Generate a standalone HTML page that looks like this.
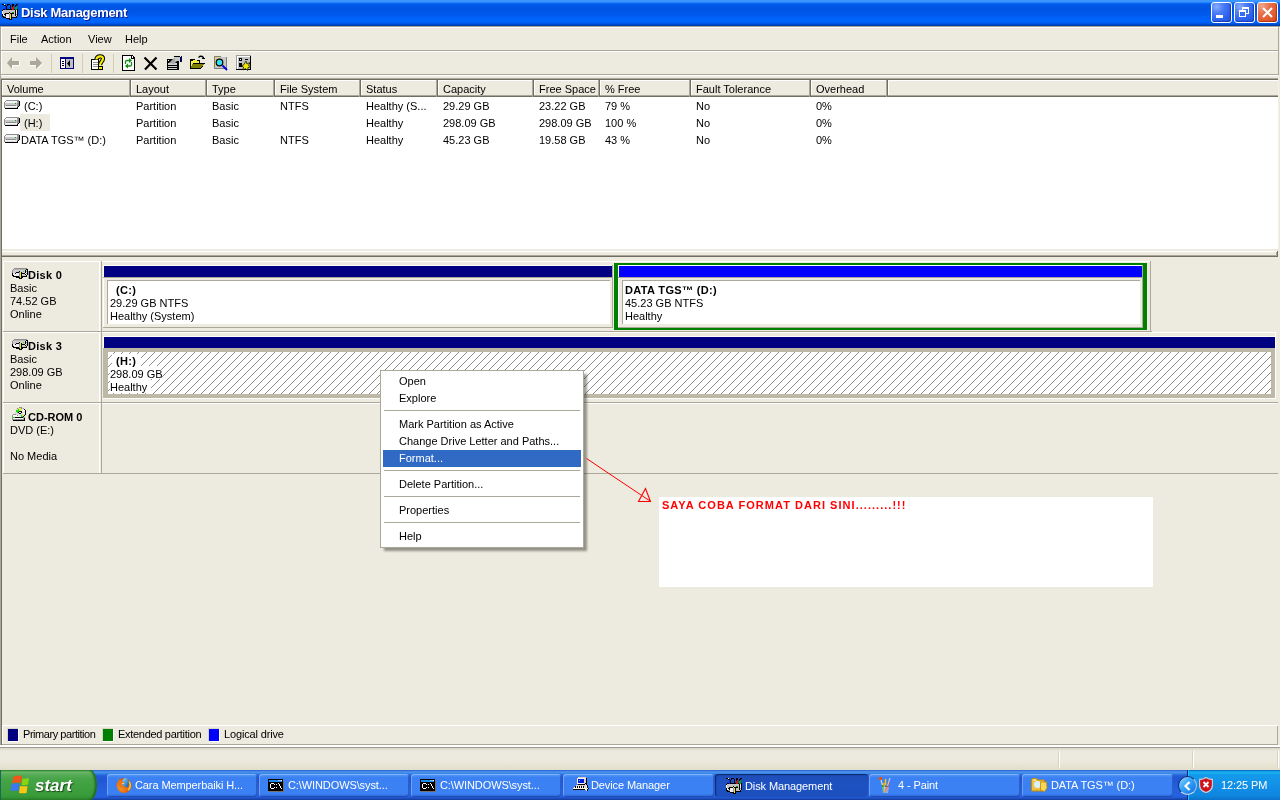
<!DOCTYPE html><html><head><meta charset="utf-8"><style>
*{margin:0;padding:0;box-sizing:border-box}
html,body{width:1280px;height:800px;overflow:hidden;background:#EDEADF;font-family:"Liberation Sans",sans-serif;font-size:11px;color:#000}
.a{position:absolute}
.t{position:absolute;white-space:nowrap;line-height:13px;margin-top:1px}
.b{font-weight:bold}
#title{left:0;top:0;width:1280px;height:26px;background:linear-gradient(to bottom,#3D95FF 0px,#3D95FF 2px,#0A6CF8 3px,#0058E6 5px,#0054E3 9px,#0058EC 14px,#0062F8 18px,#0066FF 21px,#005CF0 23px,#0046C0 25px,#00309A 26px)}
.tb{position:absolute;top:2px;width:21px;height:21px;border:1px solid #fff;border-radius:3px;box-shadow:inset -1px -1px 1px rgba(0,20,120,.45)}
.hc{position:absolute;top:0;height:16px;padding-left:5px;padding-top:1px;line-height:16px;white-space:nowrap}
.hc:before{content:"";position:absolute;left:0;top:0;width:1px;height:15px;background:#fff}
.nl:after{display:none}
.hc:after{content:"";position:absolute;right:0;top:-1px;width:1px;height:17px;background:#716F64;box-shadow:-1px 1px 0 #ACA899}
.cell{position:absolute;top:0;white-space:nowrap}
.mi{position:absolute;left:1px;width:201px;height:17px;line-height:17px;padding-left:18px;white-space:nowrap}
.sep{position:absolute;left:3px;width:197px;height:1px;background:#ACA899}
.tk{position:absolute;top:774px;height:23px;border-radius:3px;color:#fff;font-size:11px;line-height:22px;white-space:nowrap;overflow:hidden;background:linear-gradient(to bottom,#5A9BF8 0%,#3C81F3 15%,#3C81F3 85%,#2B62D8 100%);box-shadow:inset 1px 1px 0 rgba(255,255,255,.25),inset -1px -1px 0 rgba(0,0,40,.25)}
.tk .tt{position:absolute;left:28px;top:0;letter-spacing:-0.1px}
.tk svg{position:absolute;left:9px;top:3px}
</style></head><body><div style="position:absolute;left:0;top:0;width:1280px;height:800px;overflow:hidden;will-change:transform">
<div id="title" class="a">
<svg class="a" style="left:0px;top:4px" width="18" height="16" shape-rendering="crispEdges"><rect x="2" y="0" width="2" height="1" fill="#000"/><rect x="4" y="0" width="1" height="1" fill="#F0F0F0"/><rect x="7" y="0" width="3" height="1" fill="#000"/><rect x="12" y="0" width="2" height="1" fill="#000"/><rect x="16" y="0" width="2" height="1" fill="#000"/><rect x="4" y="1" width="2" height="1" fill="#000"/><rect x="7" y="1" width="1" height="1" fill="#000"/><rect x="10" y="1" width="1" height="1" fill="#000"/><rect x="12" y="1" width="2" height="1" fill="#000"/><rect x="15" y="1" width="2" height="1" fill="#000"/><rect x="5" y="2" width="1" height="1" fill="#1030F0"/><rect x="6" y="2" width="1" height="1" fill="#000"/><rect x="10" y="2" width="1" height="1" fill="#000"/><rect x="12" y="2" width="1" height="1" fill="#000"/><rect x="13" y="2" width="1" height="1" fill="#C01818"/><rect x="15" y="2" width="1" height="1" fill="#000"/><rect x="16" y="2" width="1" height="1" fill="#10A010"/><rect x="5" y="3" width="1" height="1" fill="#1030F0"/><rect x="6" y="3" width="1" height="1" fill="#000"/><rect x="10" y="3" width="1" height="1" fill="#000"/><rect x="12" y="3" width="2" height="1" fill="#C01818"/><rect x="15" y="3" width="2" height="1" fill="#10A010"/><rect x="4" y="4" width="2" height="1" fill="#1030F0"/><rect x="6" y="4" width="1" height="1" fill="#000"/><rect x="10" y="4" width="1" height="1" fill="#000"/><rect x="12" y="4" width="2" height="1" fill="#C01818"/><rect x="15" y="4" width="2" height="1" fill="#10A010"/><rect x="3" y="5" width="2" height="1" fill="#000"/><rect x="5" y="5" width="1" height="1" fill="#1030F0"/><rect x="6" y="5" width="6" height="1" fill="#000"/><rect x="12" y="5" width="2" height="1" fill="#C01818"/><rect x="14" y="5" width="1" height="1" fill="#000"/><rect x="15" y="5" width="2" height="1" fill="#10A010"/><rect x="17" y="5" width="1" height="1" fill="#000"/><rect x="2" y="6" width="1" height="1" fill="#000"/><rect x="3" y="6" width="12" height="1" fill="#C4C4C4"/><rect x="15" y="6" width="1" height="1" fill="#000"/><rect x="16" y="6" width="1" height="1" fill="#F0F0F0"/><rect x="17" y="6" width="1" height="1" fill="#000"/><rect x="2" y="7" width="1" height="1" fill="#F0F0F0"/><rect x="3" y="7" width="12" height="1" fill="#C4C4C4"/><rect x="15" y="7" width="1" height="1" fill="#000"/><rect x="16" y="7" width="1" height="1" fill="#F0F0F0"/><rect x="17" y="7" width="1" height="1" fill="#000"/><rect x="2" y="8" width="1" height="1" fill="#F0F0F0"/><rect x="3" y="8" width="6" height="1" fill="#C4C4C4"/><rect x="9" y="8" width="1" height="1" fill="#000"/><rect x="10" y="8" width="2" height="1" fill="#C4C4C4"/><rect x="12" y="8" width="2" height="1" fill="#10A010"/><rect x="14" y="8" width="1" height="1" fill="#C4C4C4"/><rect x="15" y="8" width="1" height="1" fill="#000"/><rect x="16" y="8" width="1" height="1" fill="#F0F0F0"/><rect x="17" y="8" width="1" height="1" fill="#000"/><rect x="2" y="9" width="1" height="1" fill="#F0F0F0"/><rect x="3" y="9" width="2" height="1" fill="#C4C4C4"/><rect x="5" y="9" width="4" height="1" fill="#000"/><rect x="9" y="9" width="1" height="1" fill="#F8F000"/><rect x="10" y="9" width="4" height="1" fill="#000"/><rect x="14" y="9" width="1" height="1" fill="#C4C4C4"/><rect x="15" y="9" width="1" height="1" fill="#000"/><rect x="16" y="9" width="1" height="1" fill="#F0F0F0"/><rect x="17" y="9" width="1" height="1" fill="#000"/><rect x="2" y="10" width="1" height="1" fill="#000"/><rect x="3" y="10" width="1" height="1" fill="#F0F0F0"/><rect x="4" y="10" width="2" height="1" fill="#000"/><rect x="6" y="10" width="3" height="1" fill="#F0F0F0"/><rect x="9" y="10" width="1" height="1" fill="#9090C0"/><rect x="10" y="10" width="1" height="1" fill="#F8F000"/><rect x="11" y="10" width="1" height="1" fill="#000"/><rect x="12" y="10" width="3" height="1" fill="#C4C4C4"/><rect x="15" y="10" width="1" height="1" fill="#000"/><rect x="16" y="10" width="1" height="1" fill="#909090"/><rect x="17" y="10" width="1" height="1" fill="#000"/><rect x="2" y="11" width="1" height="1" fill="#000"/><rect x="3" y="11" width="2" height="1" fill="#F0F0F0"/><rect x="5" y="11" width="1" height="1" fill="#000"/><rect x="6" y="11" width="3" height="1" fill="#F0F0F0"/><rect x="9" y="11" width="1" height="1" fill="#9090C0"/><rect x="10" y="11" width="1" height="1" fill="#F8F000"/><rect x="11" y="11" width="1" height="1" fill="#000"/><rect x="12" y="11" width="3" height="1" fill="#C4C4C4"/><rect x="15" y="11" width="1" height="1" fill="#000"/><rect x="16" y="11" width="1" height="1" fill="#F0F0F0"/><rect x="17" y="11" width="1" height="1" fill="#000"/><rect x="2" y="12" width="2" height="1" fill="#000"/><rect x="4" y="12" width="2" height="1" fill="#909090"/><rect x="6" y="12" width="3" height="1" fill="#F0F0F0"/><rect x="9" y="12" width="1" height="1" fill="#9090C0"/><rect x="10" y="12" width="1" height="1" fill="#F8F000"/><rect x="11" y="12" width="1" height="1" fill="#000"/><rect x="12" y="12" width="4" height="1" fill="#C4C4C4"/><rect x="16" y="12" width="1" height="1" fill="#000"/><rect x="3" y="13" width="3" height="1" fill="#000"/><rect x="6" y="13" width="3" height="1" fill="#F0F0F0"/><rect x="9" y="13" width="1" height="1" fill="#9090C0"/><rect x="10" y="13" width="1" height="1" fill="#F8F000"/><rect x="11" y="13" width="6" height="1" fill="#000"/><rect x="6" y="14" width="4" height="1" fill="#000"/><rect x="10" y="14" width="1" height="1" fill="#F8F000"/><rect x="11" y="14" width="1" height="1" fill="#000"/><rect x="9" y="15" width="3" height="1" fill="#000"/></svg>
<div class="a b" style="left:21px;top:5px;color:#fff;font-size:13px;line-height:16px;letter-spacing:-0.3px;text-shadow:1px 1px 0 #0F1E8C">Disk Management</div>
<div class="tb" style="left:1211px;background:radial-gradient(circle at 25% 20%,#8AAEFF 0%,#4C7EF5 30%,#2D62EE 65%,#1F55E5 100%)"><div class="a" style="left:4px;top:12px;width:7px;height:3px;background:#fff"></div></div>
<div class="tb" style="left:1234px;background:radial-gradient(circle at 25% 20%,#8AAEFF 0%,#4C7EF5 30%,#2D62EE 65%,#1F55E5 100%)"><div class="a" style="left:7px;top:4px;width:7px;height:7px;border:1px solid #fff;border-top-width:2px"></div><div class="a" style="left:4px;top:7px;width:7px;height:7px;border:1px solid #fff;border-top-width:2px;background:#3A6CF0"></div></div>
<div class="tb" style="left:1257px;width:21px;background:radial-gradient(circle at 20% 15%,#F4A58A 0%,#E8704C 35%,#E25A2C 70%,#D8461A 100%);box-shadow:inset -1px -1px 1px rgba(120,20,0,.5)"><svg class="a" style="left:4px;top:4px" width="11" height="11"><path d="M1 1 L10 10 M10 1 L1 10" stroke="#fff" stroke-width="2"/></svg></div>
</div>
<div class="a" style="left:0;top:26px;width:1280px;height:744px;background:#EDEADF"></div>
<div class="a" style="left:0;top:26px;width:1px;height:744px;background:#ACA899"></div>
<div class="a" style="left:1278px;top:27px;width:1px;height:24px;background:#ACA899"></div>
<div class="a" style="left:1278px;top:51px;width:1px;height:24px;background:#ACA899"></div>
<div class="a" style="left:1278px;top:79px;width:1px;height:170px;background:#F6F0E6"></div>
<div class="a" style="left:0px;top:26px;width:1280px;height:1px;background:#A8A490"></div>
<div class="a" style="left:1px;top:27px;width:1277px;height:1px;background:#fff"></div>
<div class="a" style="left:1px;top:27px;width:1px;height:23px;background:#fff"></div>
<div class="t" style="left:10px;top:32px">File</div>
<div class="t" style="left:41px;top:32px">Action</div>
<div class="t" style="left:88px;top:32px">View</div>
<div class="t" style="left:125px;top:32px">Help</div>
<div class="a" style="left:1px;top:50px;width:1277px;height:1px;background:#ACA899"></div>
<div class="a" style="left:1px;top:51px;width:1277px;height:1px;background:#fff"></div>
<div class="a" style="left:1px;top:52px;width:1px;height:22px;background:#fff"></div>
<div class="a" style="left:1px;top:74px;width:1277px;height:1px;background:#ACA899"></div>
<div class="a" style="left:1px;top:75px;width:1277px;height:1px;background:#fff"></div>
<div class="a" style="left:51px;top:54px;width:1px;height:19px;background:#D2CCB5"></div>
<div class="a" style="left:82px;top:54px;width:1px;height:19px;background:#D2CCB5"></div>
<div class="a" style="left:113px;top:54px;width:1px;height:19px;background:#D2CCB5"></div>
<svg class="a" style="left:0;top:50px" width="260" height="25" viewBox="0 50 260 25" shape-rendering="crispEdges">
<!-- back arrow -->
<path d="M12 57 L12 61 L19 61 L19 65 L12 65 L12 69 L7 63 Z" fill="#ACA899" shape-rendering="geometricPrecision"/>
<path d="M12.5 69 L12.5 65.5 L19.5 65.5 L19.5 61" stroke="#fff" fill="none" shape-rendering="geometricPrecision"/>
<!-- forward arrow -->
<path d="M36 57 L36 61 L30 61 L30 65 L36 65 L36 69 L42 63 Z" fill="#ACA899" shape-rendering="geometricPrecision"/>
<path d="M36.5 69.5 L42.5 63.5 M30 65.5 L36 65.5" stroke="#fff" fill="none" shape-rendering="geometricPrecision"/>
<!-- console tree -->
<rect x="60" y="57" width="14" height="12" fill="#000080"/>
<rect x="61" y="59" width="4" height="9" fill="#fff"/>
<rect x="66" y="59" width="7" height="9" fill="#C0C0C0"/>
<rect x="62" y="61" width="2" height="1" fill="#000"/><rect x="62" y="63" width="2" height="1" fill="#000"/><rect x="62" y="65" width="2" height="1" fill="#000"/>
<path d="M70 60 L70 67 L67 63.5 Z" fill="#000" shape-rendering="geometricPrecision"/>
<!-- help -->
<rect x="91" y="59" width="8" height="11" fill="#000"/>
<rect x="92" y="60" width="6" height="9" fill="#fff"/>
<rect x="93" y="62" width="5" height="1" fill="#909090"/><rect x="93" y="64" width="5" height="1" fill="#909090"/><rect x="93" y="66" width="5" height="1" fill="#909090"/>
<path d="M96.5 59.5 C96.5 56 103 55 103 58.5 C103 61 100.5 62 100 65" stroke="#000" stroke-width="4.2" fill="none" shape-rendering="geometricPrecision"/>
<path d="M96.5 59.5 C96.5 56 103 55 103 58.5 C103 61 100.5 62 100 65" stroke="#F8F000" stroke-width="2.2" fill="none" shape-rendering="geometricPrecision"/>
<rect x="98" y="66" width="5" height="4" fill="#000"/>
<rect x="99" y="67" width="3" height="2" fill="#F8F000"/>
<!-- refresh doc -->
<path d="M122 55 L132 55 L135 58 L135 71 L122 71 Z" fill="#000"/>
<path d="M123 56 L131 56 L131 59 L134 59 L134 70 L123 70 Z" fill="#fff"/>
<rect x="132" y="56" width="1" height="2" fill="#fff"/>
<path d="M125.5 64 L125.5 61.5 Q125.5 60.5 127 60.5 L130 60.5" stroke="#109010" stroke-width="1.3" fill="none" shape-rendering="geometricPrecision"/>
<path d="M129 58 L132 60.5 L129 63 Z" fill="#109010" shape-rendering="geometricPrecision"/>
<path d="M131.5 62 L131.5 65 Q131.5 66 130 66 L127 66" stroke="#109010" stroke-width="1.3" fill="none" shape-rendering="geometricPrecision"/>
<path d="M128 63.5 L125 66 L128 68.5 Z" fill="#109010" shape-rendering="geometricPrecision"/>
<!-- delete X -->
<path d="M144.5 57.5 L156.5 69.5 M156.5 57.5 L145 69.5" stroke="#000" stroke-width="2.2" fill="none" shape-rendering="geometricPrecision"/>
<!-- properties -->
<rect x="167" y="59" width="12" height="11" fill="#000"/>
<rect x="168" y="63" width="9" height="2" fill="#D0D0D0"/>
<rect x="168" y="66" width="9" height="1" fill="#D0D0D0"/>
<rect x="168" y="68" width="9" height="1" fill="#D0D0D0"/>
<rect x="168" y="60" width="1" height="1" fill="#fff"/>
<path d="M169 63 L175 57 L178 60 L174 64 Z" fill="#A8A8A8" shape-rendering="geometricPrecision"/>
<rect x="174" y="56" width="6" height="1" fill="#000"/>
<rect x="175" y="57" width="5" height="4" fill="#C8C8C8"/>
<rect x="180" y="57" width="1" height="5" fill="#000"/>
<rect x="181" y="56" width="1" height="6" fill="#0000A0"/>
<!-- open folder -->
<path d="M190 59 L194 59 L195 60 L200 60 L200 63 L205 63 L201 69 L190 69 Z" fill="#000"/>
<path d="M191 61 L194 60 L199 61 L199 63 L193 63 L191 67 Z" fill="#F8F040"/>
<path d="M192 64 L204 64 L200 68 L191 68 Z" fill="#808000"/>
<path d="M198.5 57.5 Q201 55 203.5 57.5" stroke="#000" stroke-width="1.2" fill="none" shape-rendering="geometricPrecision"/>
<rect x="203" y="57" width="1" height="2" fill="#000"/><rect x="202" y="58" width="3" height="1" fill="#000"/>
<!-- search -->
<path d="M214 56 L220 56 L221 57 L227 57 L227 69 L214 69 Z" fill="#808080"/>
<rect x="215" y="57" width="11" height="11" fill="#C8C8C8"/>
<path d="M215 57 h6 M215 57 v10" stroke="#F0E020" stroke-dasharray="1 1" fill="none"/>
<circle cx="219.5" cy="62.5" r="3.3" fill="#30E0F0" stroke="#000" stroke-width="1.2" shape-rendering="geometricPrecision"/>
<path d="M222.5 65.5 L227 70" stroke="#0000E0" stroke-width="1.8" shape-rendering="geometricPrecision"/>
<!-- settings -->
<rect x="236" y="55" width="15" height="15" fill="#A0A0A0"/>
<rect x="237" y="56" width="13" height="13" fill="#fff"/>
<rect x="238" y="57" width="12" height="12" fill="#C0C0C0"/>
<rect x="250" y="56" width="1" height="14" fill="#000"/>
<rect x="236" y="69" width="15" height="1" fill="#000"/>
<rect x="239" y="58" width="3" height="3" fill="#000"/><rect x="240" y="59" width="1" height="1" fill="#fff"/>
<rect x="239" y="63" width="3" height="4" fill="#000"/>
<rect x="245" y="59" width="3" height="1" fill="#000"/>
<path d="M246 61 L247 64 L250 62.5 L248.5 65.5 L251 67 L248 67.5 L247.5 70.5 L245.5 68.5 L243 70 L243.5 67 L241.5 66 L244 64.5 Z" fill="#F0E800" stroke="#000" stroke-width="0.7" shape-rendering="geometricPrecision"/>
</svg>
<div class="a" style="left:1px;top:78px;width:1277px;height:1px;background:#ACA899"></div>
<div class="a" style="left:1px;top:79px;width:1px;height:178px;background:#716F64"></div>
<div class="a" style="left:2px;top:79px;width:1276px;height:1px;background:#716F64"></div>
<div class="a" style="left:2px;top:80px;width:1276px;height:169px;background:#fff"></div>
<div class="a" style="left:2px;top:80px;width:1276px;height:17px;background:#EDEADF;border-bottom:1px solid #716F64"></div>
<div class="a" style="left:2px;top:95px;width:1276px;height:1px;background:#ACA899"></div>
<div class="a" style="left:2px;top:80px;width:1276px;height:1px;background:#fff"></div>
<div class="hc" style="left:2px;top:80px;width:129px">Volume</div>
<div class="hc" style="left:131px;top:80px;width:76px">Layout</div>
<div class="hc" style="left:207px;top:80px;width:68px">Type</div>
<div class="hc" style="left:275px;top:80px;width:86px">File System</div>
<div class="hc" style="left:361px;top:80px;width:77px">Status</div>
<div class="hc" style="left:438px;top:80px;width:96px">Capacity</div>
<div class="hc" style="left:534px;top:80px;width:66px">Free Space</div>
<div class="hc" style="left:600px;top:80px;width:91px">% Free</div>
<div class="hc" style="left:691px;top:80px;width:120px">Fault Tolerance</div>
<div class="hc" style="left:811px;top:80px;width:77px">Overhead</div>
<div class="hc nl" style="left:888px;top:80px;width:390px"></div>
<svg class="a" style="left:4px;top:100px" width="16" height="9" shape-rendering="crispEdges"><rect x="2" y="0" width="13" height="1" fill="#8E8E8E"/><rect x="1" y="1" width="1" height="1" fill="#8E8E8E"/><rect x="2" y="1" width="11" height="1" fill="#F4F4F4"/><rect x="13" y="1" width="2" height="1" fill="#8E8E8E"/><rect x="15" y="1" width="1" height="1" fill="#000"/><rect x="0" y="2" width="1" height="1" fill="#8E8E8E"/><rect x="1" y="2" width="12" height="1" fill="#F4F4F4"/><rect x="13" y="2" width="1" height="1" fill="#B0B0B0"/><rect x="14" y="2" width="1" height="1" fill="#8E8E8E"/><rect x="15" y="2" width="1" height="1" fill="#000"/><rect x="0" y="3" width="1" height="1" fill="#8E8E8E"/><rect x="1" y="3" width="10" height="1" fill="#C8C8C8"/><rect x="11" y="3" width="1" height="1" fill="#10A010"/><rect x="12" y="3" width="1" height="1" fill="#C8C8C8"/><rect x="13" y="3" width="2" height="1" fill="#8E8E8E"/><rect x="15" y="3" width="1" height="1" fill="#000"/><rect x="0" y="4" width="1" height="1" fill="#8E8E8E"/><rect x="1" y="4" width="12" height="1" fill="#C8C8C8"/><rect x="13" y="4" width="2" height="1" fill="#8E8E8E"/><rect x="15" y="4" width="1" height="1" fill="#000"/><rect x="0" y="5" width="1" height="1" fill="#8E8E8E"/><rect x="1" y="5" width="1" height="1" fill="#C8C8C8"/><rect x="2" y="5" width="10" height="1" fill="#8A8A8A"/><rect x="12" y="5" width="1" height="1" fill="#C8C8C8"/><rect x="13" y="5" width="2" height="1" fill="#8E8E8E"/><rect x="15" y="5" width="1" height="1" fill="#000"/><rect x="0" y="6" width="1" height="1" fill="#8E8E8E"/><rect x="1" y="6" width="12" height="1" fill="#F4F4F4"/><rect x="13" y="6" width="1" height="1" fill="#8E8E8E"/><rect x="14" y="6" width="1" height="1" fill="#000"/><rect x="0" y="7" width="1" height="1" fill="#8E8E8E"/><rect x="1" y="7" width="12" height="1" fill="#E0E0E0"/><rect x="13" y="7" width="1" height="1" fill="#000"/><rect x="1" y="8" width="13" height="1" fill="#000"/></svg>
<div class="t" style="left:24px;top:99px">(C:)</div>
<div class="t" style="left:136px;top:99px">Partition</div>
<div class="t" style="left:212px;top:99px">Basic</div>
<div class="t" style="left:280px;top:99px">NTFS</div>
<div class="t" style="left:366px;top:99px">Healthy (S...</div>
<div class="t" style="left:443px;top:99px">29.29 GB</div>
<div class="t" style="left:539px;top:99px">23.22 GB</div>
<div class="t" style="left:605px;top:99px">79 %</div>
<div class="t" style="left:696px;top:99px">No</div>
<div class="t" style="left:816px;top:99px">0%</div>
<svg class="a" style="left:4px;top:117px" width="16" height="9" shape-rendering="crispEdges"><rect x="2" y="0" width="13" height="1" fill="#8E8E8E"/><rect x="1" y="1" width="1" height="1" fill="#8E8E8E"/><rect x="2" y="1" width="11" height="1" fill="#F4F4F4"/><rect x="13" y="1" width="2" height="1" fill="#8E8E8E"/><rect x="15" y="1" width="1" height="1" fill="#000"/><rect x="0" y="2" width="1" height="1" fill="#8E8E8E"/><rect x="1" y="2" width="12" height="1" fill="#F4F4F4"/><rect x="13" y="2" width="1" height="1" fill="#B0B0B0"/><rect x="14" y="2" width="1" height="1" fill="#8E8E8E"/><rect x="15" y="2" width="1" height="1" fill="#000"/><rect x="0" y="3" width="1" height="1" fill="#8E8E8E"/><rect x="1" y="3" width="10" height="1" fill="#C8C8C8"/><rect x="11" y="3" width="1" height="1" fill="#10A010"/><rect x="12" y="3" width="1" height="1" fill="#C8C8C8"/><rect x="13" y="3" width="2" height="1" fill="#8E8E8E"/><rect x="15" y="3" width="1" height="1" fill="#000"/><rect x="0" y="4" width="1" height="1" fill="#8E8E8E"/><rect x="1" y="4" width="12" height="1" fill="#C8C8C8"/><rect x="13" y="4" width="2" height="1" fill="#8E8E8E"/><rect x="15" y="4" width="1" height="1" fill="#000"/><rect x="0" y="5" width="1" height="1" fill="#8E8E8E"/><rect x="1" y="5" width="1" height="1" fill="#C8C8C8"/><rect x="2" y="5" width="10" height="1" fill="#8A8A8A"/><rect x="12" y="5" width="1" height="1" fill="#C8C8C8"/><rect x="13" y="5" width="2" height="1" fill="#8E8E8E"/><rect x="15" y="5" width="1" height="1" fill="#000"/><rect x="0" y="6" width="1" height="1" fill="#8E8E8E"/><rect x="1" y="6" width="12" height="1" fill="#F4F4F4"/><rect x="13" y="6" width="1" height="1" fill="#8E8E8E"/><rect x="14" y="6" width="1" height="1" fill="#000"/><rect x="0" y="7" width="1" height="1" fill="#8E8E8E"/><rect x="1" y="7" width="12" height="1" fill="#E0E0E0"/><rect x="13" y="7" width="1" height="1" fill="#000"/><rect x="1" y="8" width="13" height="1" fill="#000"/></svg>
<div class="a" style="left:20px;top:114px;width:30px;height:17px;background:#EDEADF"></div>
<div class="t" style="left:24px;top:116px">(H:)</div>
<div class="t" style="left:136px;top:116px">Partition</div>
<div class="t" style="left:212px;top:116px">Basic</div>
<div class="t" style="left:280px;top:116px"></div>
<div class="t" style="left:366px;top:116px">Healthy</div>
<div class="t" style="left:443px;top:116px">298.09 GB</div>
<div class="t" style="left:539px;top:116px">298.09 GB</div>
<div class="t" style="left:605px;top:116px">100 %</div>
<div class="t" style="left:696px;top:116px">No</div>
<div class="t" style="left:816px;top:116px">0%</div>
<svg class="a" style="left:4px;top:134px" width="16" height="9" shape-rendering="crispEdges"><rect x="2" y="0" width="13" height="1" fill="#8E8E8E"/><rect x="1" y="1" width="1" height="1" fill="#8E8E8E"/><rect x="2" y="1" width="11" height="1" fill="#F4F4F4"/><rect x="13" y="1" width="2" height="1" fill="#8E8E8E"/><rect x="15" y="1" width="1" height="1" fill="#000"/><rect x="0" y="2" width="1" height="1" fill="#8E8E8E"/><rect x="1" y="2" width="12" height="1" fill="#F4F4F4"/><rect x="13" y="2" width="1" height="1" fill="#B0B0B0"/><rect x="14" y="2" width="1" height="1" fill="#8E8E8E"/><rect x="15" y="2" width="1" height="1" fill="#000"/><rect x="0" y="3" width="1" height="1" fill="#8E8E8E"/><rect x="1" y="3" width="10" height="1" fill="#C8C8C8"/><rect x="11" y="3" width="1" height="1" fill="#10A010"/><rect x="12" y="3" width="1" height="1" fill="#C8C8C8"/><rect x="13" y="3" width="2" height="1" fill="#8E8E8E"/><rect x="15" y="3" width="1" height="1" fill="#000"/><rect x="0" y="4" width="1" height="1" fill="#8E8E8E"/><rect x="1" y="4" width="12" height="1" fill="#C8C8C8"/><rect x="13" y="4" width="2" height="1" fill="#8E8E8E"/><rect x="15" y="4" width="1" height="1" fill="#000"/><rect x="0" y="5" width="1" height="1" fill="#8E8E8E"/><rect x="1" y="5" width="1" height="1" fill="#C8C8C8"/><rect x="2" y="5" width="10" height="1" fill="#8A8A8A"/><rect x="12" y="5" width="1" height="1" fill="#C8C8C8"/><rect x="13" y="5" width="2" height="1" fill="#8E8E8E"/><rect x="15" y="5" width="1" height="1" fill="#000"/><rect x="0" y="6" width="1" height="1" fill="#8E8E8E"/><rect x="1" y="6" width="12" height="1" fill="#F4F4F4"/><rect x="13" y="6" width="1" height="1" fill="#8E8E8E"/><rect x="14" y="6" width="1" height="1" fill="#000"/><rect x="0" y="7" width="1" height="1" fill="#8E8E8E"/><rect x="1" y="7" width="12" height="1" fill="#E0E0E0"/><rect x="13" y="7" width="1" height="1" fill="#000"/><rect x="1" y="8" width="13" height="1" fill="#000"/></svg>
<div class="t" style="left:21px;top:133px">DATA TGS™ (D:)</div>
<div class="t" style="left:136px;top:133px">Partition</div>
<div class="t" style="left:212px;top:133px">Basic</div>
<div class="t" style="left:280px;top:133px">NTFS</div>
<div class="t" style="left:366px;top:133px">Healthy</div>
<div class="t" style="left:443px;top:133px">45.23 GB</div>
<div class="t" style="left:539px;top:133px">19.58 GB</div>
<div class="t" style="left:605px;top:133px">43 %</div>
<div class="t" style="left:696px;top:133px">No</div>
<div class="t" style="left:816px;top:133px">0%</div>
<div class="a" style="left:2px;top:251px;width:1275px;height:1px;background:#fff"></div>
<div class="a" style="left:2px;top:255px;width:1275px;height:1px;background:#ACA899"></div>
<div class="a" style="left:1276px;top:252px;width:1px;height:4px;background:#ACA899"></div>
<div class="a" style="left:1277px;top:251px;width:1px;height:6px;background:#716F64"></div>
<div class="a" style="left:1px;top:256px;width:1277px;height:1px;background:#716F64"></div>
<div class="a" style="left:1px;top:257px;width:1px;height:488px;background:#716F64"></div>
<div class="a" style="left:2px;top:726px;width:1px;height:18px;background:#fff"></div>
<div class="a" style="left:1277px;top:725px;width:1px;height:20px;background:#ACA899"></div>
<div class="a" style="left:3px;top:261px;width:1148px;height:1px;background:#fff"></div>
<div class="a" style="left:3px;top:261px;width:1px;height:70px;background:#fff"></div>
<div class="a" style="left:3px;top:331px;width:1149px;height:1px;background:#ACA899"></div>
<div class="a" style="left:99px;top:261px;width:1px;height:70px;background:#fff"></div>
<div class="a" style="left:101px;top:261px;width:1px;height:70px;background:#ACA899"></div>
<div class="a" style="left:3px;top:332px;width:1274px;height:1px;background:#fff"></div>
<div class="a" style="left:3px;top:332px;width:1px;height:70px;background:#fff"></div>
<div class="a" style="left:3px;top:402px;width:1275px;height:1px;background:#ACA899"></div>
<div class="a" style="left:99px;top:332px;width:1px;height:70px;background:#fff"></div>
<div class="a" style="left:101px;top:332px;width:1px;height:70px;background:#ACA899"></div>
<div class="a" style="left:3px;top:403px;width:1274px;height:1px;background:#fff"></div>
<div class="a" style="left:3px;top:403px;width:1px;height:70px;background:#fff"></div>
<div class="a" style="left:3px;top:473px;width:1275px;height:1px;background:#ACA899"></div>
<div class="a" style="left:99px;top:403px;width:1px;height:70px;background:#fff"></div>
<div class="a" style="left:101px;top:403px;width:1px;height:70px;background:#ACA899"></div>
<svg class="a" style="left:12px;top:268px" width="16" height="11" shape-rendering="crispEdges"><rect x="2" y="0" width="13" height="1" fill="#8E8E8E"/><rect x="1" y="1" width="1" height="1" fill="#8E8E8E"/><rect x="2" y="1" width="12" height="1" fill="#B4B4B4"/><rect x="14" y="1" width="2" height="1" fill="#000"/><rect x="0" y="2" width="1" height="1" fill="#8E8E8E"/><rect x="1" y="2" width="12" height="1" fill="#CCCCCC"/><rect x="13" y="2" width="1" height="1" fill="#000"/><rect x="14" y="2" width="1" height="1" fill="#F0F0F0"/><rect x="15" y="2" width="1" height="1" fill="#000"/><rect x="0" y="3" width="1" height="1" fill="#8E8E8E"/><rect x="1" y="3" width="6" height="1" fill="#CCCCCC"/><rect x="7" y="3" width="1" height="1" fill="#000"/><rect x="8" y="3" width="3" height="1" fill="#CCCCCC"/><rect x="11" y="3" width="1" height="1" fill="#20F020"/><rect x="12" y="3" width="1" height="1" fill="#CCCCCC"/><rect x="13" y="3" width="1" height="1" fill="#000"/><rect x="14" y="3" width="1" height="1" fill="#8E8E8E"/><rect x="15" y="3" width="1" height="1" fill="#000"/><rect x="0" y="4" width="1" height="1" fill="#8E8E8E"/><rect x="1" y="4" width="3" height="1" fill="#CCCCCC"/><rect x="4" y="4" width="3" height="1" fill="#000"/><rect x="7" y="4" width="1" height="1" fill="#9090B8"/><rect x="8" y="4" width="1" height="1" fill="#F0F000"/><rect x="9" y="4" width="1" height="1" fill="#000"/><rect x="10" y="4" width="3" height="1" fill="#CCCCCC"/><rect x="13" y="4" width="1" height="1" fill="#000"/><rect x="14" y="4" width="1" height="1" fill="#F0F0F0"/><rect x="15" y="4" width="1" height="1" fill="#000"/><rect x="0" y="5" width="1" height="1" fill="#000"/><rect x="1" y="5" width="2" height="1" fill="#F0F0F0"/><rect x="3" y="5" width="1" height="1" fill="#000"/><rect x="4" y="5" width="3" height="1" fill="#F0F0F0"/><rect x="7" y="5" width="1" height="1" fill="#9090B8"/><rect x="8" y="5" width="1" height="1" fill="#F0F000"/><rect x="9" y="5" width="4" height="1" fill="#000"/><rect x="13" y="5" width="1" height="1" fill="#F0F0F0"/><rect x="14" y="5" width="1" height="1" fill="#8E8E8E"/><rect x="15" y="5" width="1" height="1" fill="#000"/><rect x="0" y="6" width="1" height="1" fill="#000"/><rect x="1" y="6" width="6" height="1" fill="#F0F0F0"/><rect x="7" y="6" width="1" height="1" fill="#9090B8"/><rect x="8" y="6" width="1" height="1" fill="#F0F000"/><rect x="9" y="6" width="1" height="1" fill="#000"/><rect x="10" y="6" width="3" height="1" fill="#CCCCCC"/><rect x="13" y="6" width="1" height="1" fill="#000"/><rect x="14" y="6" width="1" height="1" fill="#F0F0F0"/><rect x="15" y="6" width="1" height="1" fill="#000"/><rect x="0" y="7" width="2" height="1" fill="#000"/><rect x="2" y="7" width="5" height="1" fill="#F0F0F0"/><rect x="7" y="7" width="1" height="1" fill="#9090B8"/><rect x="8" y="7" width="1" height="1" fill="#F0F000"/><rect x="9" y="7" width="1" height="1" fill="#000"/><rect x="10" y="7" width="4" height="1" fill="#CCCCCC"/><rect x="14" y="7" width="1" height="1" fill="#000"/><rect x="1" y="8" width="6" height="1" fill="#000"/><rect x="7" y="8" width="1" height="1" fill="#9090B8"/><rect x="8" y="8" width="1" height="1" fill="#F0F000"/><rect x="9" y="8" width="6" height="1" fill="#000"/><rect x="4" y="9" width="4" height="1" fill="#000"/><rect x="8" y="9" width="1" height="1" fill="#F0F000"/><rect x="9" y="9" width="2" height="1" fill="#000"/><rect x="7" y="10" width="3" height="1" fill="#000"/></svg>
<div class="t b" style="left:28px;top:268px;letter-spacing:0.3px">Disk 0</div>
<div class="t" style="left:10px;top:281px">Basic</div>
<div class="t" style="left:10px;top:294px">74.52 GB</div>
<div class="t" style="left:10px;top:307px">Online</div>
<svg class="a" style="left:12px;top:339px" width="16" height="11" shape-rendering="crispEdges"><rect x="2" y="0" width="13" height="1" fill="#8E8E8E"/><rect x="1" y="1" width="1" height="1" fill="#8E8E8E"/><rect x="2" y="1" width="12" height="1" fill="#B4B4B4"/><rect x="14" y="1" width="2" height="1" fill="#000"/><rect x="0" y="2" width="1" height="1" fill="#8E8E8E"/><rect x="1" y="2" width="12" height="1" fill="#CCCCCC"/><rect x="13" y="2" width="1" height="1" fill="#000"/><rect x="14" y="2" width="1" height="1" fill="#F0F0F0"/><rect x="15" y="2" width="1" height="1" fill="#000"/><rect x="0" y="3" width="1" height="1" fill="#8E8E8E"/><rect x="1" y="3" width="6" height="1" fill="#CCCCCC"/><rect x="7" y="3" width="1" height="1" fill="#000"/><rect x="8" y="3" width="3" height="1" fill="#CCCCCC"/><rect x="11" y="3" width="1" height="1" fill="#20F020"/><rect x="12" y="3" width="1" height="1" fill="#CCCCCC"/><rect x="13" y="3" width="1" height="1" fill="#000"/><rect x="14" y="3" width="1" height="1" fill="#8E8E8E"/><rect x="15" y="3" width="1" height="1" fill="#000"/><rect x="0" y="4" width="1" height="1" fill="#8E8E8E"/><rect x="1" y="4" width="3" height="1" fill="#CCCCCC"/><rect x="4" y="4" width="3" height="1" fill="#000"/><rect x="7" y="4" width="1" height="1" fill="#9090B8"/><rect x="8" y="4" width="1" height="1" fill="#F0F000"/><rect x="9" y="4" width="1" height="1" fill="#000"/><rect x="10" y="4" width="3" height="1" fill="#CCCCCC"/><rect x="13" y="4" width="1" height="1" fill="#000"/><rect x="14" y="4" width="1" height="1" fill="#F0F0F0"/><rect x="15" y="4" width="1" height="1" fill="#000"/><rect x="0" y="5" width="1" height="1" fill="#000"/><rect x="1" y="5" width="2" height="1" fill="#F0F0F0"/><rect x="3" y="5" width="1" height="1" fill="#000"/><rect x="4" y="5" width="3" height="1" fill="#F0F0F0"/><rect x="7" y="5" width="1" height="1" fill="#9090B8"/><rect x="8" y="5" width="1" height="1" fill="#F0F000"/><rect x="9" y="5" width="4" height="1" fill="#000"/><rect x="13" y="5" width="1" height="1" fill="#F0F0F0"/><rect x="14" y="5" width="1" height="1" fill="#8E8E8E"/><rect x="15" y="5" width="1" height="1" fill="#000"/><rect x="0" y="6" width="1" height="1" fill="#000"/><rect x="1" y="6" width="6" height="1" fill="#F0F0F0"/><rect x="7" y="6" width="1" height="1" fill="#9090B8"/><rect x="8" y="6" width="1" height="1" fill="#F0F000"/><rect x="9" y="6" width="1" height="1" fill="#000"/><rect x="10" y="6" width="3" height="1" fill="#CCCCCC"/><rect x="13" y="6" width="1" height="1" fill="#000"/><rect x="14" y="6" width="1" height="1" fill="#F0F0F0"/><rect x="15" y="6" width="1" height="1" fill="#000"/><rect x="0" y="7" width="2" height="1" fill="#000"/><rect x="2" y="7" width="5" height="1" fill="#F0F0F0"/><rect x="7" y="7" width="1" height="1" fill="#9090B8"/><rect x="8" y="7" width="1" height="1" fill="#F0F000"/><rect x="9" y="7" width="1" height="1" fill="#000"/><rect x="10" y="7" width="4" height="1" fill="#CCCCCC"/><rect x="14" y="7" width="1" height="1" fill="#000"/><rect x="1" y="8" width="6" height="1" fill="#000"/><rect x="7" y="8" width="1" height="1" fill="#9090B8"/><rect x="8" y="8" width="1" height="1" fill="#F0F000"/><rect x="9" y="8" width="6" height="1" fill="#000"/><rect x="4" y="9" width="4" height="1" fill="#000"/><rect x="8" y="9" width="1" height="1" fill="#F0F000"/><rect x="9" y="9" width="2" height="1" fill="#000"/><rect x="7" y="10" width="3" height="1" fill="#000"/></svg>
<div class="t b" style="left:28px;top:339px;letter-spacing:0.3px">Disk 3</div>
<div class="t" style="left:10px;top:352px">Basic</div>
<div class="t" style="left:10px;top:365px">298.09 GB</div>
<div class="t" style="left:10px;top:378px">Online</div>
<svg class="a" style="left:12px;top:407px" width="17" height="14" shape-rendering="crispEdges"><rect x="7" y="0" width="3" height="1" fill="#8E8E8E"/><rect x="5" y="1" width="1" height="1" fill="#8E8E8E"/><rect x="6" y="1" width="1" height="1" fill="#D8D8E0"/><rect x="7" y="1" width="2" height="1" fill="#F8F000"/><rect x="9" y="1" width="1" height="1" fill="#8E8E8E"/><rect x="10" y="1" width="1" height="1" fill="#D8D8E0"/><rect x="11" y="1" width="1" height="1" fill="#8E8E8E"/><rect x="4" y="2" width="2" height="1" fill="#D8D8E0"/><rect x="6" y="2" width="1" height="1" fill="#10E010"/><rect x="7" y="2" width="2" height="1" fill="#F8F000"/><rect x="9" y="2" width="2" height="1" fill="#D8D8E0"/><rect x="11" y="2" width="1" height="1" fill="#F8F8F8"/><rect x="12" y="2" width="1" height="1" fill="#000"/><rect x="4" y="3" width="3" height="1" fill="#10E010"/><rect x="7" y="3" width="2" height="1" fill="#F8F000"/><rect x="9" y="3" width="1" height="1" fill="#D8D8E0"/><rect x="10" y="3" width="3" height="1" fill="#F8F8F8"/><rect x="13" y="3" width="1" height="1" fill="#000"/><rect x="4" y="4" width="3" height="1" fill="#10E010"/><rect x="7" y="4" width="3" height="1" fill="#000"/><rect x="10" y="4" width="3" height="1" fill="#F8F8F8"/><rect x="13" y="4" width="1" height="1" fill="#000"/><rect x="3" y="5" width="2" height="1" fill="#D8D8E0"/><rect x="5" y="5" width="1" height="1" fill="#10E010"/><rect x="6" y="5" width="1" height="1" fill="#000"/><rect x="7" y="5" width="2" height="1" fill="#F8F8F8"/><rect x="9" y="5" width="1" height="1" fill="#000"/><rect x="10" y="5" width="3" height="1" fill="#D8D8E0"/><rect x="13" y="5" width="1" height="1" fill="#000"/><rect x="3" y="6" width="4" height="1" fill="#D8D8E0"/><rect x="7" y="6" width="2" height="1" fill="#000"/><rect x="9" y="6" width="2" height="1" fill="#D8D8E0"/><rect x="11" y="6" width="2" height="1" fill="#F8F8F8"/><rect x="13" y="6" width="1" height="1" fill="#000"/><rect x="1" y="7" width="3" height="1" fill="#8E8E8E"/><rect x="4" y="7" width="6" height="1" fill="#D8D8E0"/><rect x="10" y="7" width="1" height="1" fill="#F8F000"/><rect x="11" y="7" width="2" height="1" fill="#D8D8E0"/><rect x="13" y="7" width="1" height="1" fill="#000"/><rect x="0" y="8" width="1" height="1" fill="#8E8E8E"/><rect x="1" y="8" width="4" height="1" fill="#F8F8F8"/><rect x="5" y="8" width="1" height="1" fill="#8E8E8E"/><rect x="6" y="8" width="1" height="1" fill="#F8F8F8"/><rect x="7" y="8" width="2" height="1" fill="#D8D8E0"/><rect x="9" y="8" width="1" height="1" fill="#10E010"/><rect x="10" y="8" width="1" height="1" fill="#F8F000"/><rect x="11" y="8" width="1" height="1" fill="#D8D8E0"/><rect x="12" y="8" width="1" height="1" fill="#000"/><rect x="0" y="9" width="1" height="1" fill="#8E8E8E"/><rect x="1" y="9" width="8" height="1" fill="#F8F8F8"/><rect x="9" y="9" width="2" height="1" fill="#10E010"/><rect x="11" y="9" width="1" height="1" fill="#000"/><rect x="0" y="10" width="1" height="1" fill="#8E8E8E"/><rect x="1" y="10" width="2" height="1" fill="#10E010"/><rect x="3" y="10" width="8" height="1" fill="#000"/><rect x="11" y="10" width="1" height="1" fill="#A8A8A8"/><rect x="12" y="10" width="1" height="1" fill="#8E8E8E"/><rect x="0" y="11" width="1" height="1" fill="#8E8E8E"/><rect x="1" y="11" width="10" height="1" fill="#F8F8F8"/><rect x="11" y="11" width="1" height="1" fill="#A8A8A8"/><rect x="12" y="11" width="1" height="1" fill="#000"/><rect x="0" y="12" width="12" height="1" fill="#8E8E8E"/><rect x="12" y="12" width="1" height="1" fill="#000"/><rect x="1" y="13" width="12" height="1" fill="#000"/></svg>
<div class="t b" style="left:28px;top:410px">CD-ROM 0</div>
<div class="t" style="left:10px;top:423px">DVD (E:)</div>
<div class="t" style="left:10px;top:449px">No Media</div>
<div class="a" style="left:103px;top:265px;width:509px;height:1px;background:#fff"></div>
<div class="a" style="left:103px;top:265px;width:1px;height:62px;background:#fff"></div>
<div class="a" style="left:104px;top:266px;width:508px;height:11px;background:#000080"></div>
<div class="a" style="left:103px;top:277px;width:509px;height:1px;background:#ACA899"></div>
<div class="a" style="left:107px;top:280px;width:503px;height:44px;background:#fff;border-left:1px solid #ACA899;border-top:1px solid #ACA899"></div>
<div class="a" style="left:103px;top:327px;width:510px;height:1px;background:#ACA899"></div>
<div class="a" style="left:612px;top:265px;width:1px;height:63px;background:#ACA899"></div>
<div class="t b" style="left:116px;top:283px;letter-spacing:0.3px">(C:)</div>
<div class="t" style="left:110px;top:296px">29.29 GB NTFS</div>
<div class="t" style="left:110px;top:309px">Healthy (System)</div>
<div class="a" style="left:614px;top:263px;width:533px;height:67px;border:4px solid #008000;border-top-width:2px;border-bottom-width:2px"></div>
<div class="a" style="left:1150px;top:261px;width:1px;height:71px;background:#ACA899"></div>
<div class="a" style="left:618px;top:265px;width:524px;height:1px;background:#fff"></div>
<div class="a" style="left:618px;top:265px;width:1px;height:62px;background:#fff"></div>
<div class="a" style="left:619px;top:266px;width:523px;height:11px;background:#0000FF"></div>
<div class="a" style="left:618px;top:277px;width:524px;height:1px;background:#ACA899"></div>
<div class="a" style="left:622px;top:280px;width:518px;height:44px;background:#fff;border-left:1px solid #ACA899;border-top:1px solid #ACA899"></div>
<div class="a" style="left:618px;top:327px;width:525px;height:1px;background:#ACA899"></div>
<div class="a" style="left:1142px;top:265px;width:1px;height:63px;background:#ACA899"></div>
<div class="t b" style="left:625px;top:283px;letter-spacing:0.35px">DATA TGS™ (D:)</div>
<div class="t" style="left:625px;top:296px">45.23 GB NTFS</div>
<div class="t" style="left:625px;top:309px">Healthy</div>
<div class="a" style="left:103px;top:336px;width:1172px;height:1px;background:#fff"></div>
<div class="a" style="left:103px;top:336px;width:1px;height:12px;background:#fff"></div>
<div class="a" style="left:104px;top:337px;width:1171px;height:11px;background:#000080"></div>
<div class="a" style="left:103px;top:348px;width:1172px;height:50px;background:#BEB9A6"></div>
<div class="a" style="left:1275px;top:333px;width:1px;height:66px;background:#fff"></div>
<div class="a" style="left:103px;top:398px;width:1173px;height:1px;background:#fff"></div>
<svg class="a" style="left:108px;top:352px" width="1163" height="42" shape-rendering="crispEdges"><defs><pattern id="hp" patternUnits="userSpaceOnUse" x="-108" y="-352" width="8" height="8"><rect x="0" y="2" width="1" height="1" fill="#8E8E8E"/><rect x="1" y="1" width="1" height="1" fill="#8E8E8E"/><rect x="2" y="0" width="1" height="1" fill="#8E8E8E"/><rect x="3" y="7" width="1" height="1" fill="#8E8E8E"/><rect x="4" y="6" width="1" height="1" fill="#8E8E8E"/><rect x="5" y="5" width="1" height="1" fill="#8E8E8E"/><rect x="6" y="4" width="1" height="1" fill="#8E8E8E"/><rect x="7" y="3" width="1" height="1" fill="#8E8E8E"/></pattern></defs><rect x="0" y="0" width="1163" height="42" fill="#fff"/><rect x="0" y="0" width="1163" height="42" fill="url(#hp)"/></svg>
<div class="a" style="left:112px;top:354px;width:29px;height:12px;background:#fff"></div>
<div class="a" style="left:110px;top:366px;width:51px;height:13px;background:#fff"></div>
<div class="a" style="left:110px;top:379px;width:41px;height:14px;background:#fff"></div>
<div class="t b" style="left:116px;top:354px;letter-spacing:0.3px">(H:)</div>
<div class="t" style="left:110px;top:367px">298.09 GB</div>
<div class="t" style="left:110px;top:380px">Healthy</div>
<div class="a" style="left:2px;top:725px;width:1276px;height:1px;background:#fff"></div>
<div class="a" style="left:2px;top:744px;width:1276px;height:1px;background:#ACA899"></div>
<div class="a" style="left:0px;top:745px;width:1280px;height:2px;background:#fff"></div>
<div class="a" style="left:0px;top:747px;width:1280px;height:1px;background:#A09C8C"></div>
<div class="a" style="left:7px;top:728px;width:12px;height:14px;background:#000080;border:1px solid #fff;border-top-color:#D8D4C4;border-left-color:#D8D4C4"></div>
<div class="t" style="left:23px;top:727px;letter-spacing:-0.45px">Primary partition</div>
<div class="a" style="left:102px;top:728px;width:12px;height:14px;background:#008000;border:1px solid #fff;border-top-color:#D8D4C4;border-left-color:#D8D4C4"></div>
<div class="t" style="left:118px;top:727px;letter-spacing:-0.3px">Extended partition</div>
<div class="a" style="left:208px;top:728px;width:12px;height:14px;background:#0000FF;border:1px solid #fff;border-top-color:#D8D4C4;border-left-color:#D8D4C4"></div>
<div class="t" style="left:224px;top:727px;letter-spacing:-0.15px">Logical drive</div>
<div class="a" style="left:0;top:748px;width:1280px;height:22px;background:linear-gradient(to bottom,#D8D6C8 0,#ECEAE0 3px,#ECE9DC 60%,#E2DECC)"></div>
<div class="a" style="left:1059px;top:751px;width:1px;height:17px;background:#fff"></div>
<div class="a" style="left:1058px;top:751px;width:1px;height:17px;background:#D8D3C0"></div>
<div class="a" style="left:1193px;top:751px;width:1px;height:17px;background:#fff"></div>
<div class="a" style="left:1192px;top:751px;width:1px;height:17px;background:#D8D3C0"></div>
<div class="a" style="left:1278px;top:751px;width:1px;height:17px;background:#fff"></div>
<div class="a" style="left:1277px;top:751px;width:1px;height:17px;background:#D8D3C0"></div>
<div class="a" style="left:384px;top:374px;width:203px;height:177px;background:rgba(40,40,30,.45);filter:blur(1px)"></div>
<div class="a" style="left:380px;top:370px;width:204px;height:178px;background:#fff;border:1px solid #ACA899"></div>
<div class="t" style="left:399px;top:374px">Open</div>
<div class="t" style="left:399px;top:391px">Explore</div>
<div class="sep" style="left:384px;top:410px;width:196px"></div>
<div class="t" style="left:399px;top:417px">Mark Partition as Active</div>
<div class="t" style="left:399px;top:434px">Change Drive Letter and Paths...</div>
<div class="a" style="left:383px;top:450px;width:198px;height:17px;background:#316AC5"></div>
<div class="t" style="left:399px;top:451px;color:#fff">Format...</div>
<div class="sep" style="left:384px;top:470px;width:196px"></div>
<div class="t" style="left:399px;top:477px">Delete Partition...</div>
<div class="sep" style="left:384px;top:496px;width:196px"></div>
<div class="t" style="left:399px;top:503px">Properties</div>
<div class="sep" style="left:384px;top:522px;width:196px"></div>
<div class="t" style="left:399px;top:529px">Help</div>
<div class="a" style="left:659px;top:497px;width:494px;height:90px;background:#fff"></div>
<div class="t b" style="left:662px;top:498px;color:#FF0000;letter-spacing:1.03px">SAYA COBA FORMAT DARI SINI.........!!!</div>
<svg class="a" style="left:0;top:0" width="1280" height="800" viewBox="0 0 1280 800">
<path d="M586.5 458.5 L650 501" stroke="#FF0000" stroke-width="1" fill="none"/>
<path d="M645.5 488.5 L638.5 501.5 L650.5 501.5 Z" stroke="#FF0000" stroke-width="1.1" fill="none"/>
</svg>
<div class="a" style="left:0;top:770px;width:1280px;height:30px;background:linear-gradient(to bottom,#2A58C8 0,#3A7AE0 3%,#4690F0 6%,#4490E6 10%,#3883E5 12%,#2B71E0 15%,#2663DA 18%,#235BD6 20%,#2258D5 23%,#2157D6 38%,#245DDB 54%,#2562DF 86%,#245FDC 89%,#2158D4 92%,#1D4EC0 95%,#1941A5 98%)"></div>
<div class="a" style="left:0;top:770px;width:97px;height:30px;border-radius:0 7px 7px 0 / 0 15px 15px 0;background:linear-gradient(to bottom,#2E8B2E 0,#6DB86D 2px,#5BAE5B 4px,#46A446 9px,#3FA03F 18px,#389A38 26px,#2D852D 30px);box-shadow:inset -2px 0 2px #1C6A1C, inset 1px 0 0 #17695A"></div>
<svg class="a" style="left:10px;top:775px" width="20" height="19" viewBox="0 0 20 19">
<path d="M3.5 1.5 Q8 0 12 1 L11 8 Q6 7 2 8.5 Z" fill="#F0561A"/>
<path d="M12.5 3.5 Q16 4 19 3 L18 9.5 Q15 10.5 11.5 10 Z" fill="#86D414"/>
<path d="M1.5 9 Q6 7.8 9.5 8.5 L8.5 16 Q5 15 0.5 16 Z" fill="#3C78F0"/>
<path d="M10 11 Q14 11.5 17.5 11 L16.5 18 Q13 18.5 9 18 Z" fill="#F8C810"/>
</svg>
<div class="a b" style="left:35px;top:775px;color:#fff;font-size:17px;font-style:italic;line-height:22px;text-shadow:1px 1px 1px #1A4A1A">start</div>
<div class="tk" style="left:107px;width:150px;"><div class="tt" style="left:28px">Cara Memperbaiki H...</div></div>
<div class="tk" style="left:259px;width:150px;"><div class="tt" style="left:29px">C:\WINDOWS\syst...</div></div>
<div class="tk" style="left:411px;width:150px;"><div class="tt" style="left:29px">C:\WINDOWS\syst...</div></div>
<div class="tk" style="left:563px;width:151px;"><div class="tt" style="left:28px">Device Manager</div></div>
<div class="tk" style="left:715px;width:153px;background:linear-gradient(to bottom,#1E4DB8 0%,#1E52C2 50%,#1D4FBC 100%);box-shadow:inset 1px 1px 1px rgba(0,0,30,.5)"><div class="tt" style="left:30px;top:1px">Disk Management</div></div>
<div class="tk" style="left:869px;width:151px;"><div class="tt" style="left:29px">4 - Paint</div></div>
<div class="tk" style="left:1022px;width:151px;"><div class="tt" style="left:29px">DATA TGS™ (D:)</div></div>

<svg class="a" style="left:116px;top:777px" width="16" height="16" viewBox="0 0 16 16">
<defs><radialGradient id="ffo" cx="0.35" cy="0.6" r="0.7"><stop offset="0" stop-color="#F8A030"/><stop offset="0.6" stop-color="#E8680C"/><stop offset="1" stop-color="#C04008"/></radialGradient>
<linearGradient id="ffb" x1="0" y1="0" x2="1" y2="1"><stop offset="0" stop-color="#90E0FF"/><stop offset="1" stop-color="#1050A8"/></linearGradient></defs>
<circle cx="8" cy="8.5" r="7.5" fill="url(#ffo)"/>
<path d="M12.5 4 C15 6.5 15 11 12 13" stroke="#F8D030" stroke-width="1.5" fill="none"/>
<ellipse cx="9.5" cy="6" rx="3.5" ry="5" fill="url(#ffb)"/>
<path d="M1.5 1 L3 4 L6 3.5 L8 5.5 L7 7.5 L5.5 8.5 L9 9.5 L10.5 11 L8 12 L5 11 L3 9 Z" fill="#E87818"/>
<rect x="6" y="6" width="2" height="1" fill="#F8D0A0"/>
</svg>
<svg class="a" style="left:268px;top:779px" width="16" height="13" shape-rendering="crispEdges"><rect x="0" y="0" width="15" height="1" fill="#000"/><rect x="0" y="1" width="1" height="1" fill="#000"/><rect x="1" y="1" width="9" height="1" fill="#1A8CF0"/><rect x="10" y="1" width="3" height="1" fill="#7CC8FF"/><rect x="13" y="1" width="1" height="1" fill="#fff"/><rect x="14" y="1" width="1" height="1" fill="#000"/><rect x="0" y="2" width="1" height="1" fill="#000"/><rect x="1" y="2" width="13" height="1" fill="#1A8CF0"/><rect x="14" y="2" width="1" height="1" fill="#000"/><rect x="15" y="2" width="1" height="1" fill="#7A7068"/><rect x="0" y="3" width="15" height="1" fill="#000"/><rect x="15" y="3" width="1" height="1" fill="#7A7068"/><rect x="0" y="4" width="3" height="1" fill="#000"/><rect x="3" y="4" width="3" height="1" fill="#fff"/><rect x="6" y="4" width="4" height="1" fill="#000"/><rect x="10" y="4" width="1" height="1" fill="#fff"/><rect x="11" y="4" width="4" height="1" fill="#000"/><rect x="15" y="4" width="1" height="1" fill="#7A7068"/><rect x="0" y="5" width="2" height="1" fill="#000"/><rect x="2" y="5" width="1" height="1" fill="#fff"/><rect x="3" y="5" width="3" height="1" fill="#000"/><rect x="6" y="5" width="1" height="1" fill="#fff"/><rect x="7" y="5" width="1" height="1" fill="#000"/><rect x="8" y="5" width="1" height="1" fill="#fff"/><rect x="9" y="5" width="2" height="1" fill="#000"/><rect x="11" y="5" width="1" height="1" fill="#fff"/><rect x="12" y="5" width="3" height="1" fill="#000"/><rect x="15" y="5" width="1" height="1" fill="#7A7068"/><rect x="0" y="6" width="2" height="1" fill="#000"/><rect x="2" y="6" width="1" height="1" fill="#fff"/><rect x="3" y="6" width="8" height="1" fill="#000"/><rect x="11" y="6" width="1" height="1" fill="#fff"/><rect x="12" y="6" width="3" height="1" fill="#000"/><rect x="15" y="6" width="1" height="1" fill="#7A7068"/><rect x="0" y="7" width="2" height="1" fill="#000"/><rect x="2" y="7" width="1" height="1" fill="#fff"/><rect x="3" y="7" width="9" height="1" fill="#000"/><rect x="12" y="7" width="1" height="1" fill="#fff"/><rect x="13" y="7" width="2" height="1" fill="#000"/><rect x="15" y="7" width="1" height="1" fill="#7A7068"/><rect x="0" y="8" width="2" height="1" fill="#000"/><rect x="2" y="8" width="1" height="1" fill="#fff"/><rect x="3" y="8" width="3" height="1" fill="#000"/><rect x="6" y="8" width="1" height="1" fill="#fff"/><rect x="7" y="8" width="1" height="1" fill="#000"/><rect x="8" y="8" width="1" height="1" fill="#fff"/><rect x="9" y="8" width="3" height="1" fill="#000"/><rect x="12" y="8" width="1" height="1" fill="#fff"/><rect x="13" y="8" width="2" height="1" fill="#000"/><rect x="15" y="8" width="1" height="1" fill="#7A7068"/><rect x="0" y="9" width="3" height="1" fill="#000"/><rect x="3" y="9" width="3" height="1" fill="#fff"/><rect x="6" y="9" width="7" height="1" fill="#000"/><rect x="13" y="9" width="1" height="1" fill="#fff"/><rect x="14" y="9" width="1" height="1" fill="#000"/><rect x="15" y="9" width="1" height="1" fill="#7A7068"/><rect x="0" y="10" width="15" height="1" fill="#000"/><rect x="15" y="10" width="1" height="1" fill="#7A7068"/><rect x="0" y="11" width="15" height="1" fill="#000"/><rect x="15" y="11" width="1" height="1" fill="#7A7068"/><rect x="1" y="12" width="15" height="1" fill="#7A7068"/></svg><svg class="a" style="left:420px;top:779px" width="16" height="13" shape-rendering="crispEdges"><rect x="0" y="0" width="15" height="1" fill="#000"/><rect x="0" y="1" width="1" height="1" fill="#000"/><rect x="1" y="1" width="9" height="1" fill="#1A8CF0"/><rect x="10" y="1" width="3" height="1" fill="#7CC8FF"/><rect x="13" y="1" width="1" height="1" fill="#fff"/><rect x="14" y="1" width="1" height="1" fill="#000"/><rect x="0" y="2" width="1" height="1" fill="#000"/><rect x="1" y="2" width="13" height="1" fill="#1A8CF0"/><rect x="14" y="2" width="1" height="1" fill="#000"/><rect x="15" y="2" width="1" height="1" fill="#7A7068"/><rect x="0" y="3" width="15" height="1" fill="#000"/><rect x="15" y="3" width="1" height="1" fill="#7A7068"/><rect x="0" y="4" width="3" height="1" fill="#000"/><rect x="3" y="4" width="3" height="1" fill="#fff"/><rect x="6" y="4" width="4" height="1" fill="#000"/><rect x="10" y="4" width="1" height="1" fill="#fff"/><rect x="11" y="4" width="4" height="1" fill="#000"/><rect x="15" y="4" width="1" height="1" fill="#7A7068"/><rect x="0" y="5" width="2" height="1" fill="#000"/><rect x="2" y="5" width="1" height="1" fill="#fff"/><rect x="3" y="5" width="3" height="1" fill="#000"/><rect x="6" y="5" width="1" height="1" fill="#fff"/><rect x="7" y="5" width="1" height="1" fill="#000"/><rect x="8" y="5" width="1" height="1" fill="#fff"/><rect x="9" y="5" width="2" height="1" fill="#000"/><rect x="11" y="5" width="1" height="1" fill="#fff"/><rect x="12" y="5" width="3" height="1" fill="#000"/><rect x="15" y="5" width="1" height="1" fill="#7A7068"/><rect x="0" y="6" width="2" height="1" fill="#000"/><rect x="2" y="6" width="1" height="1" fill="#fff"/><rect x="3" y="6" width="8" height="1" fill="#000"/><rect x="11" y="6" width="1" height="1" fill="#fff"/><rect x="12" y="6" width="3" height="1" fill="#000"/><rect x="15" y="6" width="1" height="1" fill="#7A7068"/><rect x="0" y="7" width="2" height="1" fill="#000"/><rect x="2" y="7" width="1" height="1" fill="#fff"/><rect x="3" y="7" width="9" height="1" fill="#000"/><rect x="12" y="7" width="1" height="1" fill="#fff"/><rect x="13" y="7" width="2" height="1" fill="#000"/><rect x="15" y="7" width="1" height="1" fill="#7A7068"/><rect x="0" y="8" width="2" height="1" fill="#000"/><rect x="2" y="8" width="1" height="1" fill="#fff"/><rect x="3" y="8" width="3" height="1" fill="#000"/><rect x="6" y="8" width="1" height="1" fill="#fff"/><rect x="7" y="8" width="1" height="1" fill="#000"/><rect x="8" y="8" width="1" height="1" fill="#fff"/><rect x="9" y="8" width="3" height="1" fill="#000"/><rect x="12" y="8" width="1" height="1" fill="#fff"/><rect x="13" y="8" width="2" height="1" fill="#000"/><rect x="15" y="8" width="1" height="1" fill="#7A7068"/><rect x="0" y="9" width="3" height="1" fill="#000"/><rect x="3" y="9" width="3" height="1" fill="#fff"/><rect x="6" y="9" width="7" height="1" fill="#000"/><rect x="13" y="9" width="1" height="1" fill="#fff"/><rect x="14" y="9" width="1" height="1" fill="#000"/><rect x="15" y="9" width="1" height="1" fill="#7A7068"/><rect x="0" y="10" width="15" height="1" fill="#000"/><rect x="15" y="10" width="1" height="1" fill="#7A7068"/><rect x="0" y="11" width="15" height="1" fill="#000"/><rect x="15" y="11" width="1" height="1" fill="#7A7068"/><rect x="1" y="12" width="15" height="1" fill="#7A7068"/></svg><svg class="a" style="left:572px;top:777px" width="17" height="14" shape-rendering="crispEdges"><rect x="6" y="0" width="8" height="1" fill="#D8D4C8"/><rect x="5" y="1" width="1" height="1" fill="#D8D4C8"/><rect x="6" y="1" width="7" height="1" fill="#F4F4F0"/><rect x="13" y="1" width="1" height="1" fill="#D8D4C8"/><rect x="14" y="1" width="1" height="1" fill="#000"/><rect x="5" y="2" width="1" height="1" fill="#F4F4F0"/><rect x="6" y="2" width="6" height="1" fill="#0018E0"/><rect x="12" y="2" width="2" height="1" fill="#D8D4C8"/><rect x="14" y="2" width="1" height="1" fill="#000"/><rect x="5" y="3" width="1" height="1" fill="#F4F4F0"/><rect x="6" y="3" width="1" height="1" fill="#0018E0"/><rect x="7" y="3" width="1" height="1" fill="#20E8F0"/><rect x="8" y="3" width="4" height="1" fill="#0018E0"/><rect x="12" y="3" width="2" height="1" fill="#D8D4C8"/><rect x="14" y="3" width="1" height="1" fill="#000"/><rect x="5" y="4" width="1" height="1" fill="#F4F4F0"/><rect x="6" y="4" width="6" height="1" fill="#0018E0"/><rect x="12" y="4" width="2" height="1" fill="#D8D4C8"/><rect x="14" y="4" width="1" height="1" fill="#000"/><rect x="5" y="5" width="1" height="1" fill="#F4F4F0"/><rect x="6" y="5" width="6" height="1" fill="#0018E0"/><rect x="12" y="5" width="2" height="1" fill="#D8D4C8"/><rect x="14" y="5" width="1" height="1" fill="#000"/><rect x="5" y="6" width="7" height="1" fill="#F4F4F0"/><rect x="12" y="6" width="1" height="1" fill="#D8D4C8"/><rect x="13" y="6" width="2" height="1" fill="#000"/><rect x="6" y="7" width="7" height="1" fill="#000"/><rect x="13" y="7" width="1" height="1" fill="#D8D4C8"/><rect x="14" y="7" width="1" height="1" fill="#000"/><rect x="4" y="8" width="10" height="1" fill="#D8D4C8"/><rect x="14" y="8" width="1" height="1" fill="#F4F4F0"/><rect x="15" y="8" width="1" height="1" fill="#000"/><rect x="3" y="9" width="1" height="1" fill="#000"/><rect x="4" y="9" width="1" height="1" fill="#F4F4F0"/><rect x="5" y="9" width="1" height="1" fill="#000"/><rect x="6" y="9" width="1" height="1" fill="#F4F4F0"/><rect x="7" y="9" width="1" height="1" fill="#000"/><rect x="8" y="9" width="1" height="1" fill="#F4F4F0"/><rect x="9" y="9" width="1" height="1" fill="#000"/><rect x="10" y="9" width="1" height="1" fill="#F4F4F0"/><rect x="11" y="9" width="1" height="1" fill="#000"/><rect x="12" y="9" width="2" height="1" fill="#D8D4C8"/><rect x="14" y="9" width="1" height="1" fill="#F4F4F0"/><rect x="15" y="9" width="1" height="1" fill="#000"/><rect x="2" y="10" width="1" height="1" fill="#F4F4F0"/><rect x="3" y="10" width="1" height="1" fill="#000"/><rect x="4" y="10" width="1" height="1" fill="#F4F4F0"/><rect x="5" y="10" width="1" height="1" fill="#000"/><rect x="6" y="10" width="1" height="1" fill="#F4F4F0"/><rect x="7" y="10" width="1" height="1" fill="#000"/><rect x="8" y="10" width="1" height="1" fill="#F4F4F0"/><rect x="9" y="10" width="1" height="1" fill="#000"/><rect x="10" y="10" width="1" height="1" fill="#F4F4F0"/><rect x="11" y="10" width="1" height="1" fill="#000"/><rect x="12" y="10" width="1" height="1" fill="#F4F4F0"/><rect x="13" y="10" width="1" height="1" fill="#D8D4C8"/><rect x="14" y="10" width="1" height="1" fill="#F4F4F0"/><rect x="15" y="10" width="1" height="1" fill="#000"/><rect x="1" y="11" width="13" height="1" fill="#F4F4F0"/><rect x="14" y="11" width="1" height="1" fill="#D8D4C8"/><rect x="15" y="11" width="1" height="1" fill="#F4F4F0"/><rect x="16" y="11" width="1" height="1" fill="#000"/><rect x="1" y="12" width="12" height="1" fill="#000"/><rect x="13" y="12" width="2" height="1" fill="#F4F4F0"/><rect x="15" y="12" width="1" height="1" fill="#000"/><rect x="14" y="13" width="1" height="1" fill="#D8D4C8"/><rect x="15" y="13" width="1" height="1" fill="#000"/></svg>
<svg class="a" style="left:724px;top:778px" width="18" height="16" shape-rendering="crispEdges"><rect x="2" y="0" width="2" height="1" fill="#000"/><rect x="4" y="0" width="1" height="1" fill="#F0F0F0"/><rect x="7" y="0" width="3" height="1" fill="#000"/><rect x="12" y="0" width="2" height="1" fill="#000"/><rect x="16" y="0" width="2" height="1" fill="#000"/><rect x="4" y="1" width="2" height="1" fill="#000"/><rect x="7" y="1" width="1" height="1" fill="#000"/><rect x="10" y="1" width="1" height="1" fill="#000"/><rect x="12" y="1" width="2" height="1" fill="#000"/><rect x="15" y="1" width="2" height="1" fill="#000"/><rect x="5" y="2" width="1" height="1" fill="#1030F0"/><rect x="6" y="2" width="1" height="1" fill="#000"/><rect x="10" y="2" width="1" height="1" fill="#000"/><rect x="12" y="2" width="1" height="1" fill="#000"/><rect x="13" y="2" width="1" height="1" fill="#C01818"/><rect x="15" y="2" width="1" height="1" fill="#000"/><rect x="16" y="2" width="1" height="1" fill="#10A010"/><rect x="5" y="3" width="1" height="1" fill="#1030F0"/><rect x="6" y="3" width="1" height="1" fill="#000"/><rect x="10" y="3" width="1" height="1" fill="#000"/><rect x="12" y="3" width="2" height="1" fill="#C01818"/><rect x="15" y="3" width="2" height="1" fill="#10A010"/><rect x="4" y="4" width="2" height="1" fill="#1030F0"/><rect x="6" y="4" width="1" height="1" fill="#000"/><rect x="10" y="4" width="1" height="1" fill="#000"/><rect x="12" y="4" width="2" height="1" fill="#C01818"/><rect x="15" y="4" width="2" height="1" fill="#10A010"/><rect x="3" y="5" width="2" height="1" fill="#000"/><rect x="5" y="5" width="1" height="1" fill="#1030F0"/><rect x="6" y="5" width="6" height="1" fill="#000"/><rect x="12" y="5" width="2" height="1" fill="#C01818"/><rect x="14" y="5" width="1" height="1" fill="#000"/><rect x="15" y="5" width="2" height="1" fill="#10A010"/><rect x="17" y="5" width="1" height="1" fill="#000"/><rect x="2" y="6" width="1" height="1" fill="#000"/><rect x="3" y="6" width="12" height="1" fill="#C4C4C4"/><rect x="15" y="6" width="1" height="1" fill="#000"/><rect x="16" y="6" width="1" height="1" fill="#F0F0F0"/><rect x="17" y="6" width="1" height="1" fill="#000"/><rect x="2" y="7" width="1" height="1" fill="#F0F0F0"/><rect x="3" y="7" width="12" height="1" fill="#C4C4C4"/><rect x="15" y="7" width="1" height="1" fill="#000"/><rect x="16" y="7" width="1" height="1" fill="#F0F0F0"/><rect x="17" y="7" width="1" height="1" fill="#000"/><rect x="2" y="8" width="1" height="1" fill="#F0F0F0"/><rect x="3" y="8" width="6" height="1" fill="#C4C4C4"/><rect x="9" y="8" width="1" height="1" fill="#000"/><rect x="10" y="8" width="2" height="1" fill="#C4C4C4"/><rect x="12" y="8" width="2" height="1" fill="#10A010"/><rect x="14" y="8" width="1" height="1" fill="#C4C4C4"/><rect x="15" y="8" width="1" height="1" fill="#000"/><rect x="16" y="8" width="1" height="1" fill="#F0F0F0"/><rect x="17" y="8" width="1" height="1" fill="#000"/><rect x="2" y="9" width="1" height="1" fill="#F0F0F0"/><rect x="3" y="9" width="2" height="1" fill="#C4C4C4"/><rect x="5" y="9" width="4" height="1" fill="#000"/><rect x="9" y="9" width="1" height="1" fill="#F8F000"/><rect x="10" y="9" width="4" height="1" fill="#000"/><rect x="14" y="9" width="1" height="1" fill="#C4C4C4"/><rect x="15" y="9" width="1" height="1" fill="#000"/><rect x="16" y="9" width="1" height="1" fill="#F0F0F0"/><rect x="17" y="9" width="1" height="1" fill="#000"/><rect x="2" y="10" width="1" height="1" fill="#000"/><rect x="3" y="10" width="1" height="1" fill="#F0F0F0"/><rect x="4" y="10" width="2" height="1" fill="#000"/><rect x="6" y="10" width="3" height="1" fill="#F0F0F0"/><rect x="9" y="10" width="1" height="1" fill="#9090C0"/><rect x="10" y="10" width="1" height="1" fill="#F8F000"/><rect x="11" y="10" width="1" height="1" fill="#000"/><rect x="12" y="10" width="3" height="1" fill="#C4C4C4"/><rect x="15" y="10" width="1" height="1" fill="#000"/><rect x="16" y="10" width="1" height="1" fill="#909090"/><rect x="17" y="10" width="1" height="1" fill="#000"/><rect x="2" y="11" width="1" height="1" fill="#000"/><rect x="3" y="11" width="2" height="1" fill="#F0F0F0"/><rect x="5" y="11" width="1" height="1" fill="#000"/><rect x="6" y="11" width="3" height="1" fill="#F0F0F0"/><rect x="9" y="11" width="1" height="1" fill="#9090C0"/><rect x="10" y="11" width="1" height="1" fill="#F8F000"/><rect x="11" y="11" width="1" height="1" fill="#000"/><rect x="12" y="11" width="3" height="1" fill="#C4C4C4"/><rect x="15" y="11" width="1" height="1" fill="#000"/><rect x="16" y="11" width="1" height="1" fill="#F0F0F0"/><rect x="17" y="11" width="1" height="1" fill="#000"/><rect x="2" y="12" width="2" height="1" fill="#000"/><rect x="4" y="12" width="2" height="1" fill="#909090"/><rect x="6" y="12" width="3" height="1" fill="#F0F0F0"/><rect x="9" y="12" width="1" height="1" fill="#9090C0"/><rect x="10" y="12" width="1" height="1" fill="#F8F000"/><rect x="11" y="12" width="1" height="1" fill="#000"/><rect x="12" y="12" width="4" height="1" fill="#C4C4C4"/><rect x="16" y="12" width="1" height="1" fill="#000"/><rect x="3" y="13" width="3" height="1" fill="#000"/><rect x="6" y="13" width="3" height="1" fill="#F0F0F0"/><rect x="9" y="13" width="1" height="1" fill="#9090C0"/><rect x="10" y="13" width="1" height="1" fill="#F8F000"/><rect x="11" y="13" width="6" height="1" fill="#000"/><rect x="6" y="14" width="4" height="1" fill="#000"/><rect x="10" y="14" width="1" height="1" fill="#F8F000"/><rect x="11" y="14" width="1" height="1" fill="#000"/><rect x="9" y="15" width="3" height="1" fill="#000"/></svg>
<svg class="a" style="left:879px;top:777px" width="13" height="17" viewBox="0 0 13 17">
<rect x="0" y="0" width="3" height="3" fill="#E85010"/>
<path d="M2 3 L4 10" stroke="#D8D8E0" stroke-width="1.2"/>
<path d="M6.5 2 L6.5 8" stroke="#F8C800" stroke-width="1.5"/>
<path d="M5 6 L5 15" stroke="#F0C000" stroke-width="1.5"/>
<path d="M3.5 8 L5 16" stroke="#18A018" stroke-width="1.5"/>
<path d="M10 5 L6.5 15" stroke="#F03808" stroke-width="1.8"/>
<path d="M11 1 L8.5 9" stroke="#C8C8F0" stroke-width="1.2"/>
<path d="M3 10 L10 10 L9 16 L4 16 Z" fill="rgba(220,220,240,.5)"/>
</svg>
<svg class="a" style="left:1031px;top:778px" width="17" height="14" viewBox="0 0 17 14">
<path d="M0.5 2 L1.5 0.5 L5.5 0.5 L6.5 2 L13 2 L13.5 3 L13.5 13 L0.5 13 Z" fill="#F0C040" stroke="#C08810" stroke-width="1"/>
<rect x="2" y="1.5" width="3" height="1" fill="#FFF8D0"/>
<circle cx="6.5" cy="6.5" r="3.5" fill="#D8F0FF"/>
<path d="M9.5 4 L15.5 4 L16 10 L13.5 13.5 L9.5 12 Z" fill="#F8D850" stroke="#C08810" stroke-width="0.8"/>
</svg>

<div class="a" style="left:1187px;top:770px;width:93px;height:30px;background:linear-gradient(to bottom,#0C59B9 0%,#139EE9 5%,#18B5F2 10%,#139BEB 15%,#1290E8 50%,#0F86E0 85%,#0C72C8 100%);border-left:1px solid #0A2A70;box-shadow:inset 1px 0 0 #20C0FF"></div>
<div class="a" style="left:1178px;top:776px;width:19px;height:19px;border-radius:50%;background:linear-gradient(135deg,#9ADCFF 0%,#3CA8F8 40%,#0C6EE8 100%);border:1px solid;border-color:#142A78 #B8C4D8 #D8DEE8 #142A78"></div>
<svg class="a" style="left:1182px;top:780px" width="12" height="12"><path d="M7.5 2 L3.5 6 L7.5 10" stroke="#fff" stroke-width="2.2" fill="none"/></svg>
<svg class="a" style="left:1199px;top:777px" width="14" height="16" viewBox="0 0 14 16">
<path d="M7 0.5 C5 2 3 2.5 0.5 2.5 L0.5 8 C0.5 12 4 14.5 7 15.5 C10 14.5 13.5 12 13.5 8 L13.5 2.5 C11 2.5 9 2 7 0.5 Z" fill="#D0101A" stroke="#C8CCD8" stroke-width="1.3"/>
<path d="M4.5 5 L9.5 10 M9.5 5 L4.5 10" stroke="#fff" stroke-width="1.8"/></svg>
<div class="t" style="left:1221px;top:778px;color:#fff;letter-spacing:-0.1px">12:25 PM</div>
</div></body></html>
